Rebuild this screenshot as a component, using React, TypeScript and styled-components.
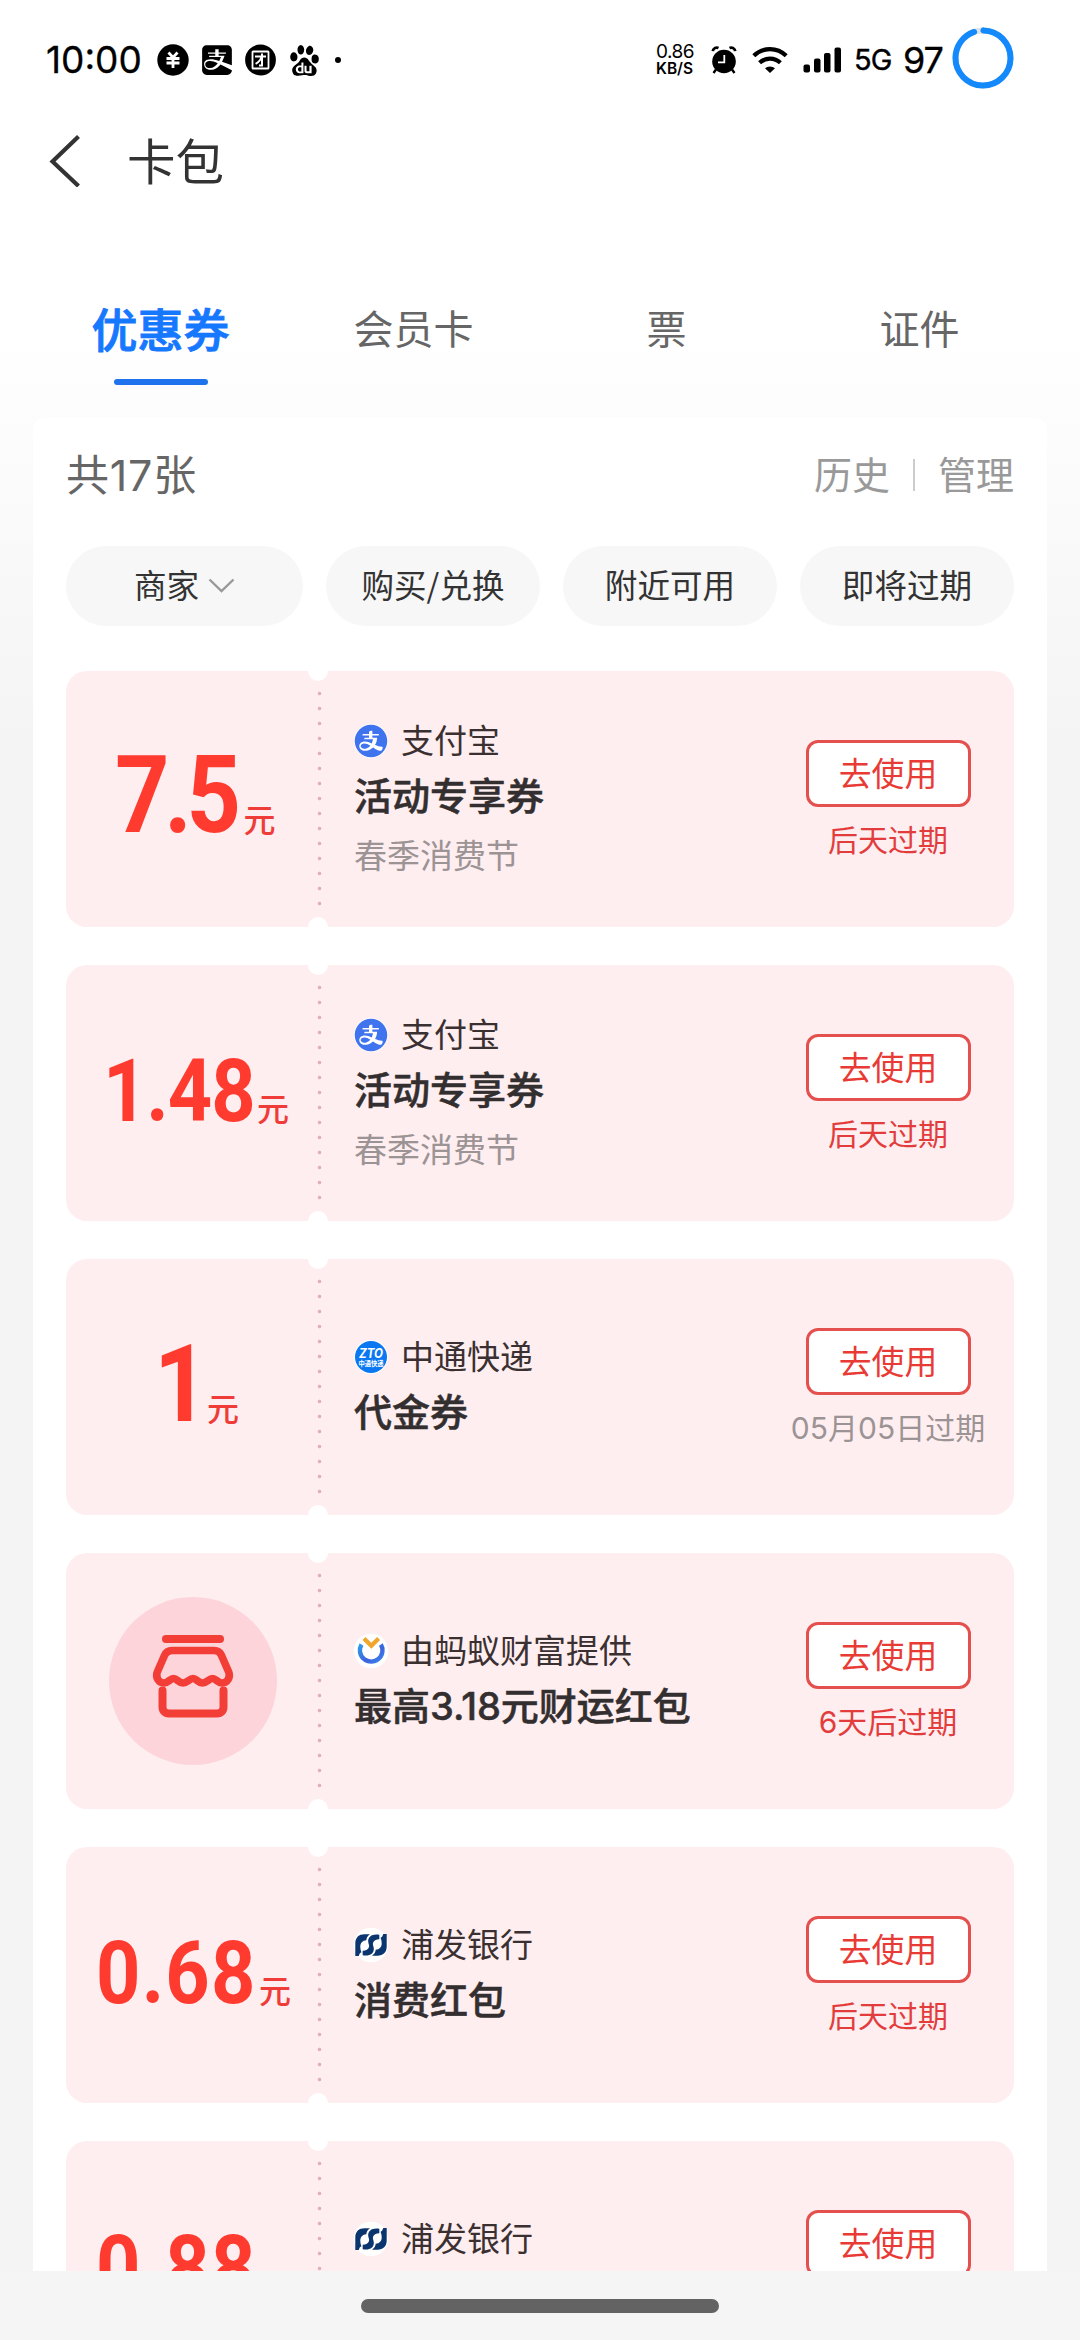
import React from 'react';
import styled, { createGlobalStyle } from 'styled-components';
import { AiFillAlipayCircle } from 'react-icons/ai';
import { FaAlipay } from 'react-icons/fa';
import { SiBaidu } from 'react-icons/si';

const GlobalStyle = createGlobalStyle`
  * { box-sizing: border-box; }
  html, body { margin: 0; padding: 0; background: #f4f4f4; }
  body {
    font-family: "Noto Sans CJK SC", "Noto Sans", sans-serif;
    -webkit-font-smoothing: antialiased;
  }
`;

const Screen = styled.main`
  width: 1080px;
  height: 2340px;
  overflow: hidden;
  display: flex;
  flex-direction: column;
  background: linear-gradient(180deg, #fff 0, #fff 320px, #f4f4f4 740px, #f4f4f4 100%);
`;

/* ---------- status bar ---------- */

const StatusBar = styled.header`
  height: 120px;
  padding: 0 66px 0 46px;
  display: flex;
  align-items: center;
  color: #000;
  font-family: Inter, "Noto Sans", sans-serif;
`;

const Clock = styled.span`
  width: 111px;
  font-size: 37px;
  line-height: 40px;
  white-space: nowrap;
  -webkit-text-stroke: 0.3px #000;
`;

const Notifications = styled.div`
  display: flex;
  align-items: center;
  gap: 13px;
  flex: 1;

  svg { display: block; }
`;

const AppIcon = styled(FaAlipay)`
  margin: 0 -2px;
`;

const Dot = styled.i`
  width: 6px;
  height: 6px;
  margin-left: 2px;
  border-radius: 50%;
  background: #000;
`;

const Indicators = styled.div`
  display: flex;
  align-items: center;

  svg { display: block; }
`;

const Glyphs = styled.div`
  display: flex;
  align-items: center;
  gap: 15px;
  padding-right: 12px;
`;

const Speed = styled.div`
  width: 40px;
  display: flex;
  flex-direction: column;
  white-space: nowrap;
`;

const SpeedValue = styled.span`
  font-size: 19px;
  line-height: 16px;
  letter-spacing: -0.5px;
`;

const SpeedUnit = styled.span`
  font-size: 15.5px;
  font-weight: 600;
  line-height: 17px;
`;

const Network = styled.span`
  width: 39px;
  font-size: 29px;
  line-height: 36px;
  letter-spacing: -1px;
  -webkit-text-stroke: 0.4px #000;
`;

const Battery = styled.span`
  width: 48px;
  margin-left: 10px;
  margin-right: 1px;
  font-size: 36px;
  line-height: 40px;
  letter-spacing: -1px;
  -webkit-text-stroke: 0.3px #000;
`;

const RingWrap = styled.div`
  margin-top: -4px;
`;

/* ---------- title bar and tabs ---------- */

const TitleBar = styled.div`
  height: 82px;
  margin-bottom: 88px;
  padding-left: 48px;
  display: flex;
  align-items: center;
  gap: 44px;
  color: #333;

  svg { display: block; }
`;

const Title = styled.h1`
  margin: -4px 0 0;
  font-size: 48.5px;
  line-height: 60px;
  font-weight: 400;
`;

const Tabs = styled.nav`
  height: 128px;
  padding: 0 34px;
  display: grid;
  grid-template-columns: repeat(4, 253px);
`;

const Tab = styled.div<{ $active?: boolean }>`
  display: flex;
  flex-direction: column;
  align-items: center;
  height: 96px;
  font-size: ${p => (p.$active ? 46 : 40)}px;
  font-weight: ${p => (p.$active ? 500 : 400)};
  line-height: 75px;
  color: ${p => (p.$active ? '#1677ff' : '#666')};
  -webkit-text-stroke: ${p => (p.$active ? '0.9px #1677ff' : '0')};

  &::after {
    content: '';
    width: 94px;
    height: 6px;
    margin-top: 14px;
    border-radius: 3px;
    background: ${p => (p.$active ? '#1f74ee' : 'transparent')};
  }
`;

/* ---------- panel ---------- */

const Panel = styled.section`
  height: 1853px;
  margin: 0 33px;
  padding: 0 33px;
  overflow: hidden;
  border-radius: 12px 12px 0 0;
  background: #fff;
`;

const Summary = styled.div`
  height: 114px;
  margin-bottom: 14px;
  padding-bottom: 5px;
  display: flex;
  align-items: center;
  justify-content: space-between;
`;

const Count = styled.span`
  padding-top: 4px;
  font-family: Inter, "Noto Sans CJK SC", sans-serif;
  font-size: 43px;
  line-height: 60px;
  color: #666;
  letter-spacing: 0.8px;
`;

const Links = styled.div`
  display: flex;
  align-items: center;
  font-size: 38px;
  line-height: 56px;
  color: #999;
`;

const LinkDivider = styled.i`
  width: 2px;
  height: 32px;
  margin: 5px 23px 0;
  background: #ccc;
`;

const Filters = styled.div`
  height: 80px;
  margin-bottom: 45px;
  display: grid;
  grid-template-columns: 237px 214px 214px 214px;
  justify-content: space-between;
`;

const Chip = styled.div`
  display: flex;
  align-items: center;
  justify-content: center;
  gap: 9px;
  padding-bottom: 5px;
  border-radius: 40px;
  background: #f7f7f7;
  font-size: 32.6px;
  color: #333;

  svg { display: block; margin-top: 4px; }
`;

const CouponList = styled.div`
  display: flex;
  flex-direction: column;
  gap: 38px;
`;

/* ---------- coupon ---------- */

const Card = styled.article`
  position: relative;
  height: 256px;
  display: flex;
  border-radius: 21px;
  background: #feeef0;

  &::before,
  &::after {
    content: '';
    position: absolute;
    left: 242px;
    width: 20px;
    height: 20px;
    border-radius: 50%;
    background: #fff;
  }
  &::before { top: -10px; }
  &::after { bottom: -10px; }
`;

const AmountCell = styled.div`
  width: 251px;
  display: flex;
  justify-content: center;
  align-items: center;
  color: #ff3b30;
`;

const Price = styled.div<{ $shift: number; $drop: number }>`
  display: flex;
  align-items: baseline;
  margin: ${p => p.$drop}px 0 0 ${p => p.$shift}px;
`;

const Figure = styled.span<{ $size: number; $width: number; $track: number }>`
  width: ${p => p.$width}px;
  font-family: Roboto, sans-serif;
  font-weight: 700;
  font-size: ${p => p.$size}px;
  line-height: 110px;
  letter-spacing: ${p => p.$track}px;
  white-space: nowrap;
  transform: scaleX(0.88);
  transform-origin: left;
`;

const Unit = styled.span`
  font-size: 32px;
  line-height: 40px;
  font-weight: 500;
  color: #f03c38;
`;

const ShopBadge = styled.div`
  width: 168px;
  height: 168px;
  margin-left: 3px;
  display: flex;
  align-items: center;
  justify-content: center;
  border-radius: 50%;
  background: #fdd4d9;

  svg { display: block; margin-top: -11px; overflow: visible; }
`;

const Perforation = styled.div`
  width: 5px;
  height: 225px;
  margin-top: 15px;
  background: radial-gradient(circle at 50% 50%, #e2b2ba 0, #e2b2ba 1.5px, transparent 2.2px) 0 0 / 5px 15px;
`;

const Info = styled.div`
  flex: 1;
  padding-left: 32px;
  display: flex;
  flex-direction: column;
  justify-content: center;
`;

const Brand = styled.div`
  height: 50px;
  display: flex;
  align-items: center;
  gap: 13px;
  font-size: 33px;
  color: #3b3031;

  svg { display: block; overflow: visible; }
`;

const BrandName = styled.span`
  line-height: 40px;
  margin-top: -4px;
`;

const CouponName = styled.h2`
  height: 60px;
  margin: 0;
  font-family: Inter, "Noto Sans CJK SC", sans-serif;
  font-size: 38px;
  font-weight: 500;
  line-height: 60px;
  color: #332e2f;
  white-space: nowrap;
  -webkit-text-stroke: 0.5px #332e2f;
`;

const Note = styled.p`
  height: 56px;
  margin: 0;
  font-size: 33px;
  line-height: 56px;
  color: #9c9394;
`;

const Action = styled.div`
  width: 220px;
  margin-right: 16px;
  padding-top: 69px;
  display: flex;
  flex-direction: column;
  align-items: center;
`;

const UseButton = styled.button`
  width: 165px;
  height: 67px;
  padding: 0 0 4px;
  border: 3px solid #e4504e;
  border-radius: 12px;
  background: #fff;
  font-family: inherit;
  font-size: 32.8px;
  line-height: 56px;
  color: #e93b36;
`;

const Expiry = styled.span<{ $muted?: boolean }>`
  margin-top: 12px;
  font-family: Inter, "Noto Sans CJK SC", sans-serif;
  font-size: 30px;
  line-height: 42px;
  white-space: nowrap;
  color: ${p => (p.$muted ? '#9c9394' : '#e23d3c')};
`;

const BottomBar = styled.footer`
  height: 69px;
  padding-top: 28px;
  display: flex;
  justify-content: center;
  background: #f5f5f5;
`;

const HomeIndicator = styled.i`
  width: 358px;
  height: 14px;
  border-radius: 7px;
  background: #636363;
`;

/* ---------- drawings ---------- */

const YuanIcon = () => (
  <svg width="32" height="32" viewBox="0 0 32 32">
    <circle cx="16" cy="16" r="15.7" />
    <path d="M11.5 8.5l4.5 5 4.5-5M9.5 14.5h13M9.5 19h13M16 13.5v10.5" fill="none" stroke="#fff" strokeWidth="2.8" />
  </svg>
);

const GroupIcon = () => (
  <svg width="31" height="32" viewBox="0 0 31 32">
    <circle cx="15.5" cy="16" r="15.4" />
    <rect x="7.5" y="7.5" width="16" height="17" rx="0.6" fill="none" stroke="#fff" strokeWidth="1.8" />
    <path d="M10 12.4h11M17 9.5v12h-3M16.6 12.8c-1 3.4-3.2 5.600-6 7" fill="none" stroke="#fff" strokeWidth="2" />
  </svg>
);

const AlarmIcon = () => (
  <svg width="26" height="28" viewBox="0 0 26 28">
    <circle cx="13" cy="15.500" r="11.800" />
    <path d="M1.800 5.200A4 4 0 0 1 7.500 2M18.500 2a4 4 0 0 1 5.700 3.200" fill="none" stroke="#000" strokeWidth="2.800" />
    <path d="M5 23.500l-2.500 3.500M21 23.500l2.500 3.500" stroke="#000" strokeWidth="2.400" />
    <path d="M13.300 9v7.300H7" fill="none" stroke="#fff" strokeWidth="1.800" />
  </svg>
);

const WifiIcon = () => (
  <svg width="36" height="26" viewBox="0 0 36 26">
    <path d="M1.800 8.800a23 23 0 0 1 32.400 0M7.600 15.800a15 15 0 0 1 20.800 0" fill="none" stroke="#000" strokeWidth="4.200" />
    <path d="M13 21.300a7.500 7.500 0 0 1 10 0L18 26z" />
  </svg>
);

const SignalIcon = () => (
  <svg width="39" height="26" viewBox="0 0 39 26">
    <rect x="0.500" y="17.500" width="6.500" height="8" rx="2" />
    <rect x="11" y="11.500" width="6.500" height="14" rx="2" />
    <rect x="21" y="6" width="6.500" height="19.500" rx="2" />
    <rect x="31.500" y="0.500" width="6.500" height="25" rx="2" />
  </svg>
);

const BatteryRing = () => (
  <svg width="62" height="62" viewBox="0 0 62 62">
    <circle cx="31" cy="31" r="27.500" fill="none" stroke="#dfe3e8" strokeWidth="6" />
    <circle
      cx="31" cy="31" r="27.500" fill="none" stroke="#1389fb" strokeWidth="6" strokeLinecap="round"
      pathLength="100" strokeDasharray="94.500 5.500" transform="rotate(-89 31 31)"
    />
  </svg>
);

const BackIcon = () => (
  <svg width="35" height="52" viewBox="0 0 35 52">
    <path d="M30.500 1.500L4.500 26.500l26 24.500" fill="none" stroke="#333" strokeWidth="4.200" />
  </svg>
);

const ChevronIcon = () => (
  <svg width="27" height="15" viewBox="0 0 27 15">
    <path d="M1.500 1.500L13.500 13l12-11.500" fill="none" stroke="#999" strokeWidth="2.400" />
  </svg>
);

const ShopIcon = () => (
  <svg width="84" height="84" viewBox="0 0 84 84" fill="none" stroke="#f23e37" strokeWidth="8" strokeLinecap="round" strokeLinejoin="round">
    <path d="M15 5h54" />
    <path d="M21 16.500h42c3.500 0 6 1.500 7.400 4.800l7.200 16.400c2.400 6-1.400 11.300-6.600 11.300-4.500 0-6-4.500-9.500-4.500s-5.500 4.500-10 4.500-6-4.500-9.500-4.500-5.500 4.500-10 4.500-6-4.500-9.500-4.500-5 4.500-9.500 4.500c-5.200 0-9-5.300-6.600-11.300l7.200-16.400C15 18 17.500 16.500 21 16.500z" strokeWidth="7.600" />
    <path d="M11.500 56.500v16.500c0 4 2.500 6.500 6.500 6.500h48c4 0 6.500-2.500 6.500-6.500V56.500" />
  </svg>
);

const AlipayLogo = () => (
  <svg width="34" height="34" viewBox="-1 -1 34 34">
    <circle cx="16" cy="16" r="17" fill="#fff" />
    <AiFillAlipayCircle x="-2.600" y="-2.600" size={37.2} color="#3f74ee" />
  </svg>
);

const ZtoLogo = () => (
  <svg width="34" height="34" viewBox="-1 -1 34 34" fontFamily="Inter, sans-serif">
    <circle cx="16" cy="16" r="17" fill="#fff" />
    <circle cx="16" cy="16" r="16" fill="#0b78f2" />
    <text x="4" y="16.500" fontSize="12.500" fontWeight="700" fontStyle="italic" fill="#fff" textLength="24" lengthAdjust="spacingAndGlyphs">ZTO</text>
    <text x="3.500" y="24.500" fontSize="7" fontWeight="700" fill="#fff" textLength="25" lengthAdjust="spacingAndGlyphs" fontFamily="Noto Sans CJK SC, sans-serif">中通快递</text>
  </svg>
);

const FortuneLogo = () => (
  <svg width="34" height="34" viewBox="-1 -1 34 34">
    <defs>
      <linearGradient id="fortune-ring" x1="0" y1="0" x2="1" y2="1">
        <stop offset="0" stopColor="#2f9be8" />
        <stop offset="0.600" stopColor="#3d62de" />
        <stop offset="1" stopColor="#3a86f0" />
      </linearGradient>
    </defs>
    <circle cx="16" cy="16" r="17.300" fill="#fff" />
    <path d="M6.500 9.500a11.300 11.300 0 1 0 19.400 0" fill="none" stroke="url(#fortune-ring)" strokeWidth="4.400" />
    <path d="M9 3.500l7.300 7.300L23.600 3.500" fill="none" stroke="#f0a52c" strokeWidth="4.200" />
  </svg>
);

const SpdLogo = () => (
  <svg width="34" height="34" viewBox="-1 -1 34 34">
    <circle cx="16" cy="16" r="17.300" fill="#fff" />
    <g fill="#0a356f">
      <path d="M0.300 27V14.500C0.300 8.500 4 5.300 9.500 5.300H15C12.500 7 11.500 9 11.300 11.200 7.500 11.500 5.300 14 5.300 17.500c0 2.200.4 4 1.200 5.700C5 23.700 4.300 25 3.800 27z" />
      <path d="M31.700 5V17.500c0 6-3.700 9.200-9.200 9.200H17c2.500-1.700 3.500-3.700 3.700-5.900 3.800-.3 6-2.800 6-6.300 0-2.200-.4-4-1.200-5.700C27 8.300 27.700 7 28.200 5z" />
      <path d="M24.300 5.800C18 4.300 12.800 7.300 13.200 12.500c.2 2.500 1.300 3.500.8 5.500-.6 2.300-3 3.600-6.300 3.800-.2 1.500.1 3 0 4.400 6.300 1.500 11.500-1.500 11.100-6.700-.2-2.500-1.300-3.500-.8-5.500.6-2.300 3-3.600 6.300-3.800.2-1.500-.1-3 0-4.400z" />
    </g>
  </svg>
);

/* ---------- data ---------- */

type Coupon = {
  figure?: { text: string; size: number; width: number; track: number; shift: number; drop: number };
  logo: React.ReactNode;
  brand: string;
  name: string;
  note?: string;
  expiry: string;
  muted?: boolean;
};

const coupons: Coupon[] = [
  { figure: { text: '7.5', size: 108, width: 128, track: -6, shift: 8, drop: -8 }, logo: <AlipayLogo />, brand: '支付宝', name: '活动专享券', note: '春季消费节', expiry: '后天过期' },
  { figure: { text: '1.48', size: 88, width: 154, track: -1.2, shift: 9, drop: -5 }, logo: <AlipayLogo />, brand: '支付宝', name: '活动专享券', note: '春季消费节', expiry: '后天过期' },
  { figure: { text: '1', size: 108, width: 53, track: 0, shift: 10, drop: -7 }, logo: <ZtoLogo />, brand: '中通快递', name: '代金券', expiry: '05月05日过期', muted: true },
  { logo: <FortuneLogo />, brand: '由蚂蚁财富提供', name: '最高3.18元财运红包', expiry: '6天后过期' },
  { figure: { text: '0.68', size: 88, width: 163, track: 1.4, shift: 4, drop: -4 }, logo: <SpdLogo />, brand: '浦发银行', name: '消费红包', expiry: '后天过期' },
  { figure: { text: '0.88', size: 88, width: 163, track: 1.4, shift: 4, drop: -4 }, logo: <SpdLogo />, brand: '浦发银行', name: '消费红包', expiry: '后天过期' },
];

const CouponCard = ({ coupon }: { coupon: Coupon }) => (
  <Card>
    <AmountCell>
      {coupon.figure ? (
        <Price $shift={coupon.figure.shift} $drop={coupon.figure.drop}>
          <Figure $size={coupon.figure.size} $width={coupon.figure.width} $track={coupon.figure.track}>
            {coupon.figure.text}
          </Figure>
          <Unit>元</Unit>
        </Price>
      ) : (
        <ShopBadge><ShopIcon /></ShopBadge>
      )}
    </AmountCell>
    <Perforation />
    <Info>
      <Brand>
        {coupon.logo}
        <BrandName>{coupon.brand}</BrandName>
      </Brand>
      <CouponName>{coupon.name}</CouponName>
      {coupon.note && <Note>{coupon.note}</Note>}
    </Info>
    <Action>
      <UseButton>去使用</UseButton>
      <Expiry $muted={coupon.muted}>{coupon.expiry}</Expiry>
    </Action>
  </Card>
);

export default function App() {
  return (
    <>
      <GlobalStyle />
      <Screen>
        <StatusBar>
          <Clock>10:00</Clock>
          <Notifications>
            <YuanIcon />
            <AppIcon size={34} />
            <GroupIcon />
            <SiBaidu size={31} />
            <Dot />
          </Notifications>
          <Indicators>
            <Glyphs>
              <Speed>
                <SpeedValue>0.86</SpeedValue>
                <SpeedUnit>KB/S</SpeedUnit>
              </Speed>
              <AlarmIcon />
              <WifiIcon />
              <SignalIcon />
            </Glyphs>
            <Network>5G</Network>
            <Battery>97</Battery>
            <RingWrap><BatteryRing /></RingWrap>
          </Indicators>
        </StatusBar>

        <TitleBar>
          <BackIcon />
          <Title>卡包</Title>
        </TitleBar>

        <Tabs>
          <Tab $active>优惠券</Tab>
          <Tab>会员卡</Tab>
          <Tab>票</Tab>
          <Tab>证件</Tab>
        </Tabs>

        <Panel>
          <Summary>
            <Count>共17张</Count>
            <Links>
              历史
              <LinkDivider />
              管理
            </Links>
          </Summary>
          <Filters>
            <Chip>商家<ChevronIcon /></Chip>
            <Chip>购买/兑换</Chip>
            <Chip>附近可用</Chip>
            <Chip>即将过期</Chip>
          </Filters>
          <CouponList>
            {coupons.map((coupon, i) => <CouponCard key={i} coupon={coupon} />)}
          </CouponList>
        </Panel>

        <BottomBar><HomeIndicator /></BottomBar>
      </Screen>
    </>
  );
}
